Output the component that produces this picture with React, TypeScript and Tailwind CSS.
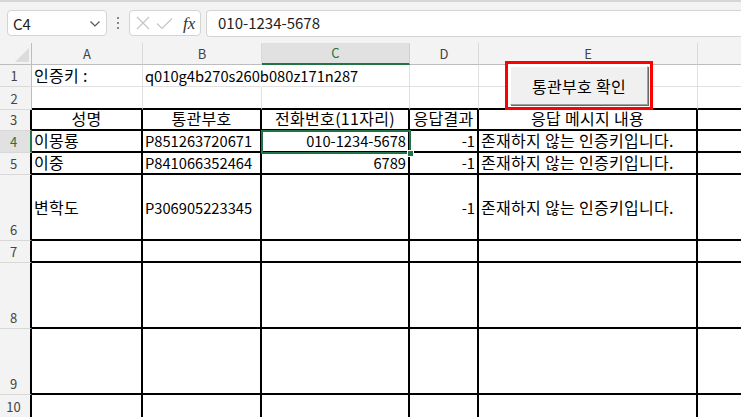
import React from 'react';

// 열 머리글 (F는 화면 밖이라 글자 없음) / 행 높이 (px)
const COLS = ['A', 'B', 'C', 'D', 'E', ''];
const ROW_H = [22, 23, 21, 22, 22, 66, 22, 66, 66, 22, 22];

type Cell = { text?: string; align?: 'left' | 'right' | 'center' };

const empty: Cell[] = [{}, {}, {}, {}, {}, {}];

const rows: Cell[][] = [
  [{ text: '인증키 :' }, { text: 'q010g4b270s260b080z171n287' }, {}, {}, {}, {}],
  empty,
  [
    { text: '성명', align: 'center' },
    { text: '통관부호', align: 'center' },
    { text: '전화번호(11자리)', align: 'center' },
    { text: '응답결과', align: 'center' },
    { text: '응답 메시지 내용', align: 'center' },
    {},
  ],
  [
    { text: '이몽룡' },
    { text: 'P851263720671' },
    { text: '010-1234-5678', align: 'right' },
    { text: '-1', align: 'right' },
    { text: '존재하지 않는 인증키입니다.' },
    {},
  ],
  [
    { text: '이중' },
    { text: 'P841066352464' },
    { text: '6789', align: 'right' },
    { text: '-1', align: 'right' },
    { text: '존재하지 않는 인증키입니다.' },
    {},
  ],
  [
    { text: '변학도' },
    { text: 'P306905223345' },
    {},
    { text: '-1', align: 'right' },
    { text: '존재하지 않는 인증키입니다.' },
    {},
  ],
  empty,
  empty,
  empty,
  empty,
  empty,
];

const FONT = "font-['Noto_Sans_CJK_KR','Noto_Sans',sans-serif]";

// 한글이 들어간 문자열은 맑은 고딕 폭에 맞추려고 조금 크게
const hasHangul = (s?: string) => !!s && /[\uac00-\ud7a3]/.test(s);

function TopBar() {
  return (
    <div className="h-[43px] bg-[#f3f3f3] border-t-2 border-[#d6d6d6] flex items-start pt-[8px]">
      {/* 이름 상자 */}
      <div className="ml-[7px] w-[100px] h-[26px] bg-white border border-[#d4d4d4] rounded-[4px] flex items-center justify-between pl-[5px] pr-[5px]">
        <span className="text-[15px] text-[#222] leading-none">C4</span>
        <svg width="12" height="8" viewBox="0 0 12 8" className="mt-[1px]">
          <path d="M1.5 1.5 L6 6 L10.5 1.5" fill="none" stroke="#555" strokeWidth="1.2" />
        </svg>
      </div>
      {/* 구분 점 */}
      <div className="w-[22px] h-[26px] flex flex-col items-center justify-center gap-[3px]">
        <span className="w-[2px] h-[2px] bg-[#888]" />
        <span className="w-[2px] h-[2px] bg-[#888]" />
        <span className="w-[2px] h-[2px] bg-[#888]" />
      </div>
      {/* 취소 / 입력 / fx */}
      <div className="w-[72px] h-[26px] bg-white border border-[#d4d4d4] rounded-[4px] flex items-center pl-[6px] gap-[6px]">
        <svg width="14" height="14" viewBox="0 0 14 14">
          <path d="M1 1 L13 13 M13 1 L1 13" stroke="#c4c4c4" strokeWidth="1.1" />
        </svg>
        <svg width="17" height="13" viewBox="0 0 17 13">
          <path d="M1 6.5 L6 11.5 L16 1.5" fill="none" stroke="#c4c4c4" strokeWidth="1.1" />
        </svg>
        <span className="font-['Liberation_Serif',serif] italic text-[17px] text-[#333] leading-none ml-[4px]">fx</span>
      </div>
      {/* 수식 입력줄 */}
      <div className="ml-[5px] flex-1 h-[27px] bg-white border border-r-0 border-[#d4d4d4] rounded-l-[4px] flex items-center pl-[11px]">
        <span className="text-[15px] text-[#222]">010-1234-5678</span>
      </div>
    </div>
  );
}

export default function App() {
  return (
    <div className={`relative w-[741px] h-[417px] overflow-hidden bg-white ${FONT}`}>
      <TopBar />

      <div className="grid grid-cols-[32px_111px_119px_148px_69px_219px_200px] grid-rows-[22px_22px_23px_21px_22px_22px_66px_22px_66px_66px_22px_22px]">
        {/* 열 머리글 */}
        <div className="bg-[#f3f3f3] border-r border-b border-[#bdbdbd] relative">
          <svg width="14" height="14" viewBox="0 0 14 14" className="absolute left-[15px] top-[5px]">
            <path d="M14 0 L14 14 L0 14 Z" fill="#dcdcdc" />
          </svg>
        </div>
        {COLS.map((c, i) =>
          c === 'C' ? (
            <div
              key={i}
              className="bg-[#e1e1e1] border-r border-[#d0d0d0] border-b-2 border-b-[#217346] flex items-center justify-center text-[13px] text-[#217346]"
            >
              {c}
            </div>
          ) : (
            <div
              key={i}
              className="bg-[#f3f3f3] border-r border-[#dadada] border-b border-b-[#bdbdbd] flex items-center justify-center text-[13px] text-[#444]"
            >
              {c}
            </div>
          )
        )}

        {rows.map((row, ri) => {
          const r = ri + 1;
          const boxed = r >= 3;
          const selRow = r === 4;
          const tail = r >= 10; // 화면 아래로 이어지는 행
          return (
            <React.Fragment key={r}>
              {/* 행 머리글 */}
              <div
                className={`flex items-end justify-center pr-[3px] pb-[1px] text-[13px] ${
                  tail ? '' : 'border-b border-[#d8d8d8]'
                } ${
                  selRow
                    ? 'bg-[#e1e1e1] text-[#217346] border-r-2 border-r-[#217346]'
                    : boxed
                    ? 'bg-[#f3f3f3] text-[#444] border-r-2 border-r-black'
                    : 'bg-[#f3f3f3] text-[#444] border-r border-r-[#bdbdbd]'
                }`}
              >
                {r}
              </div>
              {row.map((cell, ci) => {
                const overflow = r === 1 && ci === 1;
                const alignCls =
                  cell.align === 'center'
                    ? 'justify-center'
                    : cell.align === 'right'
                    ? 'justify-end pr-[2px]'
                    : 'justify-start pl-[2px]';
                const vCls = ROW_H[ri] > 40 && r === 6 ? 'items-center' : 'items-end pb-[1px]';
                const sizeCls = hasHangul(cell.text)
                  ? 'text-[16px] tracking-[0.3px]'
                  : 'text-[14.7px]';
                const bottomCls = tail
                  ? ''
                  : r >= 2
                  ? 'border-b-2 border-b-black'
                  : 'border-b border-b-[#e1e1e1]';
                const rightCls = overflow
                  ? 'border-r border-r-transparent overflow-visible z-10'
                  : boxed
                  ? 'border-r-2 border-r-black'
                  : 'border-r border-r-[#e1e1e1]';
                return (
                  <div
                    key={ci}
                    className={`relative flex ${alignCls} ${vCls} ${sizeCls} leading-[19px] text-black whitespace-nowrap ${bottomCls} ${rightCls}`}
                  >
                    {cell.text}
                  </div>
                );
              })}
            </React.Fragment>
          );
        })}
      </div>

      {/* 선택된 셀 C4 */}
      <div className="absolute left-[261px] top-[130px] w-[150px] h-[24px] border-2 border-[#217346] pointer-events-none">
        <div className="absolute right-[-5px] bottom-[-5px] w-[7px] h-[7px] bg-[#217346] border border-white" />
      </div>

      {/* 통관부호 확인 버튼 */}
      <div className="absolute left-[505px] top-[61px] w-[148px] h-[49px] border-[3px] border-[#ff0000] bg-white p-[2px]">
        <button className="w-full h-full bg-[#f0f0f0] border border-t-white border-l-white border-r-[#a0a0a0] border-b-[#a0a0a0] shadow-[1px_1px_0_#696969] flex items-center justify-center text-[16px] tracking-[0.3px] text-black">
          통관부호 확인
        </button>
      </div>
    </div>
  );
}
